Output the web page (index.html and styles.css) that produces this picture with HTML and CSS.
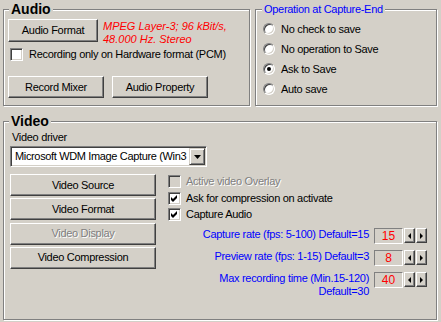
FILE: index.html
```html
<!DOCTYPE html>
<html lang="en">
<head>
    <meta charset="UTF-8">
    <title>Capture Settings</title>
    <link rel="stylesheet" href="styles.css">
</head>
<body>
    <div class="top-row">
        <fieldset class="group audio">
            <legend class="group-title">Audio</legend>
            <div class="audio-body">
                <div class="format-row">
                    <button class="btn btn-format">Audio Format</button>
                    <div class="codec-info">MPEG Layer-3; 96 kBit/s,<br>48.000 Hz. Stereo</div>
                </div>
                <label class="check check-audio">
                    <span class="box"></span>
                    Recording only on Hardware format (PCM)
                </label>
                <div class="audio-buttons">
                    <button class="btn btn-audio">Record Mixer</button>
                    <button class="btn btn-audio">Audio Property</button>
                </div>
            </div>
        </fieldset>

        <fieldset class="group capture-end">
            <legend class="group-title title-blue">Operation at Capture-End</legend>
            <div class="radio-list">
                <label class="radio"><span class="dot"></span>No check to save</label>
                <label class="radio"><span class="dot"></span>No operation to Save</label>
                <label class="radio"><span class="dot checked"></span>Ask to Save</label>
                <label class="radio"><span class="dot"></span>Auto save</label>
            </div>
        </fieldset>
    </div>

    <fieldset class="group video">
        <legend class="group-title">Video</legend>
        <div class="video-body">
            <div class="driver-label">Video driver</div>
            <div class="combo">
                <span class="combo-text">Microsoft WDM Image Capture (Win3</span>
                <span class="combo-btn">
                    <svg width="7" height="4" viewBox="0 0 7 4"><polygon points="0,0 7,0 3.5,4" fill="#000"/></svg>
                </span>
            </div>

            <div class="video-columns">
                <div class="video-buttons">
                    <button class="btn">Video Source</button>
                    <button class="btn">Video Format</button>
                    <button class="btn disabled">Video Display</button>
                    <button class="btn">Video Compression</button>
                </div>

                <div class="video-options">
                    <div class="check-list">
                        <label class="check disabled"><span class="box box-disabled"></span>Active video Overlay</label>
                        <label class="check">
                            <span class="box">
                                <svg width="7" height="7" viewBox="0 0 7 7"><polygon points="0,2 2,4 6,0 6,3 2,7 0,5" fill="#000"/></svg>
                            </span>
                            Ask for compression on activate
                        </label>
                        <label class="check">
                            <span class="box">
                                <svg width="7" height="7" viewBox="0 0 7 7"><polygon points="0,2 2,4 6,0 6,3 2,7 0,5" fill="#000"/></svg>
                            </span>
                            Capture Audio
                        </label>
                    </div>

                    <div class="rates">
                        <div class="rate-row">
                            <div class="rate-label">Capture rate (fps: 5-100) Default=15</div>
                            <div class="rate-value">15</div>
                            <div class="spin"><span class="spin-btn"><i class="arrow-left"></i></span><span class="spin-btn"><i class="arrow-right"></i></span></div>
                        </div>
                        <div class="rate-row">
                            <div class="rate-label">Preview rate (fps: 1-15) Default=3</div>
                            <div class="rate-value">8</div>
                            <div class="spin"><span class="spin-btn"><i class="arrow-left"></i></span><span class="spin-btn"><i class="arrow-right"></i></span></div>
                        </div>
                        <div class="rate-row">
                            <div class="rate-label">Max recording time (Min.15-120)<br>Default=30</div>
                            <div class="rate-value">40</div>
                            <div class="spin"><span class="spin-btn"><i class="arrow-left"></i></span><span class="spin-btn"><i class="arrow-right"></i></span></div>
                        </div>
                    </div>
                </div>
            </div>
        </div>
    </fieldset>
</body>
</html>
```

FILE: styles.css
```css
* {
    box-sizing: border-box;
}
html, body {
    margin: 0;
    padding: 0;
}
body {
    background-color: #d4d0c8;
    color: #000;
    font-family: "Liberation Sans", Arial, sans-serif;
    font-size: 11px;
    line-height: 13px;
    letter-spacing: -0.3px;
    width: 441px;
    height: 322px;
    overflow: hidden;
}

/* group boxes (etched frame) */
.top-row {
    display: flex;
    gap: 5px;
    padding: 2px 0 0 3px;
}
.group {
    margin: 0;
    padding: 0;
    min-width: 0;
    border: 1px solid #808080;
    box-shadow: 1px 1px 0 #fff, inset 1px 1px 0 #fff;
}
.group-title {
    margin-left: 5px;
    padding: 0 2px;
    font-size: 14px;
    font-weight: bold;
    line-height: 15px;
    letter-spacing: 0;
    background-color: #d4d0c8;
}
.title-blue {
    margin-left: 6px;
    font-size: 11px;
    font-weight: normal;
    letter-spacing: -0.3px;
    color: #0000ff;
}
.audio {
    width: 247px;
    height: 104px;
}
.capture-end {
    width: 182px;
    height: 104px;
}
.video {
    margin: 8px 0 0 3px;
    width: 434px;
    height: 206px;
}

/* buttons */
.btn {
    display: block;
    margin: 0;
    padding: 0;
    height: 22px;
    font: inherit;
    letter-spacing: inherit;
    color: #000;
    background-color: #d4d0c8;
    border: 1px solid;
    border-color: #fff #404040 #404040 #fff;
    box-shadow: inset -1px -1px 0 #808080;
    text-align: center;
}
.btn.disabled {
    color: #808080;
    text-shadow: 1px 1px 0 #fff;
}

/* audio */
.audio-body {
    padding: 2px 0 0 4px;
}
.format-row {
    display: flex;
    gap: 5px;
    align-items: flex-start;
}
.btn-format {
    width: 90px;
    height: 23px;
}
.codec-info {
    margin-top: 1px;
    color: #ff0000;
    font-style: italic;
    letter-spacing: 0;
}
.audio-buttons {
    display: flex;
    gap: 8px;
    margin-top: 15px;
}
.btn-audio {
    width: 96px;
}

/* checkboxes */
.check {
    display: flex;
    align-items: center;
    gap: 5px;
    height: 13px;
}
.check-audio {
    margin: 2px 0 0 2px;
    gap: 6px;
}
.box {
    flex: none;
    width: 13px;
    height: 13px;
    background-color: #fff;
    border: 1px solid;
    border-color: #808080 #fff #fff #808080;
    box-shadow: inset 1px 1px 0 #404040, inset -1px -1px 0 #d4d0c8;
    display: flex;
    align-items: center;
    justify-content: center;
}
.box svg {
    display: block;
}
.box-disabled {
    background-color: #d4d0c8;
}
.check.disabled {
    color: #808080;
    text-shadow: 1px 1px 0 #fff;
}

/* radio buttons */
.radio-list {
    padding: 2px 0 0 7px;
}
.radio {
    display: flex;
    align-items: center;
    gap: 6px;
    height: 20px;
}
.dot {
    flex: none;
    width: 12px;
    height: 12px;
    border-radius: 50%;
    background-color: #fff;
    border: 1px solid;
    border-color: #808080 #fff #fff #808080;
    box-shadow: inset 1px 1px 0 #404040, inset -1px -1px 0 #d4d0c8;
    display: flex;
    align-items: center;
    justify-content: center;
}
.dot.checked::after {
    content: "";
    width: 4px;
    height: 4px;
    border-radius: 50%;
    background-color: #000;
}

/* video */
.video-body {
    padding: 2px 0 0 6px;
}
.driver-label {
    margin-left: 2px;
}
.combo {
    display: flex;
    margin-top: 2px;
    width: 197px;
    height: 21px;
    padding: 1px;
    background-color: #fff;
    border: 1px solid;
    border-color: #808080 #fff #fff #808080;
    box-shadow: inset 1px 1px 0 #404040, inset -1px -1px 0 #d4d0c8;
}
.combo-text {
    flex: 1;
    padding: 2px 0 0 3px;
    white-space: nowrap;
    letter-spacing: -0.35px;
}
.combo-btn {
    flex: none;
    width: 16px;
    height: 17px;
    background-color: #d4d0c8;
    border: 1px solid;
    border-color: #d4d0c8 #404040 #404040 #d4d0c8;
    box-shadow: inset 1px 1px 0 #fff, inset -1px -1px 0 #808080;
    display: flex;
    align-items: center;
    justify-content: center;
}
.video-columns {
    display: flex;
    gap: 12px;
    margin-top: 7px;
}
.video-buttons {
    display: flex;
    flex-direction: column;
    gap: 2.3px;
    width: 146px;
}
.video-options {
    width: 259px;
    margin-top: 1px;
}
.check-list {
    display: flex;
    flex-direction: column;
    gap: 3.6px;
}
.rates {
    display: flex;
    flex-direction: column;
    align-items: flex-end;
    gap: 6px;
    margin-top: 7px;
}
.rate-row {
    display: flex;
    align-items: flex-start;
}
.rate-label {
    margin-right: 5px;
    color: #0000ff;
    text-align: right;
    line-height: 12.5px;
}
.rate-value {
    width: 29px;
    height: 16px;
    border: 1px solid;
    border-color: #808080 #fff #fff #808080;
    color: #ff0000;
    font-size: 12px;
    line-height: 14px;
    letter-spacing: 0;
    text-align: center;
}
.spin {
    display: flex;
    gap: 1px;
    margin-left: 1px;
}
.spin-btn {
    width: 11px;
    height: 15px;
    border: 1px solid;
    border-color: #fff #404040 #404040 #fff;
    box-shadow: inset -1px -1px 0 #808080;
    display: flex;
    align-items: center;
    justify-content: center;
}
.arrow-left {
    border-top: 3px solid transparent;
    border-bottom: 3px solid transparent;
    border-right: 3px solid #000;
}
.arrow-right {
    border-top: 3px solid transparent;
    border-bottom: 3px solid transparent;
    border-left: 3px solid #000;
}
```
